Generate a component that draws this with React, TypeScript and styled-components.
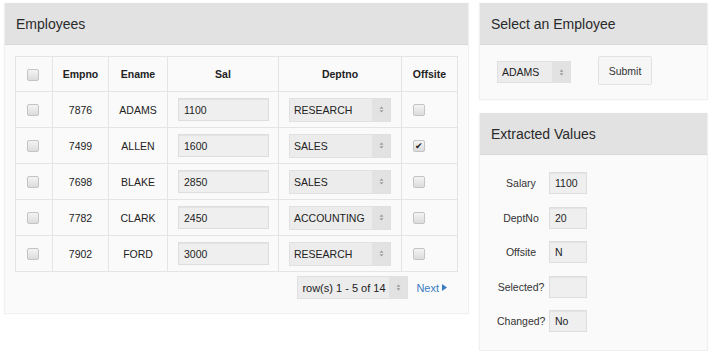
import * as React from 'react'
import styled, { createGlobalStyle } from 'styled-components'

const GlobalStyle = createGlobalStyle`
  html, body {
    margin: 0;
    padding: 0;
    background: #ffffff;
    font-family: 'Liberation Sans', Arial, Helvetica, sans-serif;
    color: #333333;
  }
`

const Page = styled.div`
  display: grid;
  grid-template-columns: 465px 229px;
  column-gap: 10px;
  padding: 3px 4px 0 4px;
  align-items: start;
`

const Column = styled.div`
  display: flex;
  flex-direction: column;
  gap: 13px;
`

const Panel = styled.div`
  background: #fafafa;
  border: 1px solid #f0f0f0;
  border-top: none;
  box-shadow: 0 0 2px rgba(0, 0, 0, 0.04);
`

const PanelHeader = styled.div`
  height: 42px;
  background: #e2e2e2;
  border-bottom: 1px solid #d8d8d8;
  box-sizing: border-box;
  display: flex;
  align-items: center;
  padding-left: 11px;
  font-size: 14px;
  color: #2a2a2a;
`

const TableBody = styled.div`
  padding: 11px 11px 14px 10px;
`

const Table = styled.table`
  border-collapse: collapse;
  width: 442px;
  table-layout: fixed;
  font-size: 10.5px;
  color: #222;
  background: #fafafa;

  th,
  td {
    border: 1px solid #e4e4e4;
    text-align: center;
    padding: 0;
  }
  th {
    height: 34px;
    font-weight: bold;
    font-size: 10.5px;
  }
  td {
    height: 35px;
  }
`

const CheckCell = styled.td<{ $pad: number }>`
  && {
    text-align: left;
    padding-left: ${p => p.$pad}px;
  }
`

const CheckHead = styled.th<{ $pad: number }>`
  && {
    text-align: left;
    padding-left: ${p => p.$pad}px;
  }
`

const Check = styled.span<{ $checked?: boolean }>`
  display: inline-flex;
  align-items: center;
  justify-content: center;
  width: 10px;
  height: 10px;
  border: 1px solid #c4c4c4;
  border-radius: 2px;
  background: linear-gradient(#f4f4f4, #dcdcdc);
  vertical-align: middle;
  font-size: 9px;
  line-height: 1;
  color: #222;
`

const TextInput = styled.div<{ $width: number; $height?: number }>`
  width: ${p => p.$width}px;
  height: ${p => p.$height || 23}px;
  box-sizing: border-box;
  background: #efefef;
  border: 1px solid #dedede;
  box-shadow: inset 0 1px 1px rgba(0, 0, 0, 0.05);
  display: flex;
  align-items: center;
  padding-left: 5px;
  font-size: 10.5px;
  color: #222;
  text-align: left;
`

const CellInner = styled.div<{ $pad: number }>`
  display: flex;
  padding-left: ${p => p.$pad}px;
`

const SelectBox = styled.div<{ $width: number; $height?: number; $size?: number }>`
  width: ${p => p.$width}px;
  height: ${p => p.$height || 24}px;
  box-sizing: border-box;
  background: #ececec;
  border: 1px solid #e0e0e0;
  display: flex;
  align-items: stretch;
  font-size: ${p => p.$size || 10.5}px;
  color: #222;
  text-align: left;
`

const SelectText = styled.span`
  flex: 1;
  display: flex;
  align-items: center;
  padding-left: 4px;
  white-space: nowrap;
  overflow: hidden;
`

const SelectArrow = styled.span`
  width: 18px;
  background: #e2e2e2;
  display: flex;
  align-items: center;
  justify-content: center;
`

const Pager = styled.div`
  display: flex;
  justify-content: flex-end;
  align-items: center;
  gap: 8px;
  padding: 4px 10px 0 0;
`

const NextLink = styled.a`
  color: #3b7cc0;
  font-size: 11px;
  text-decoration: none;
  display: flex;
  align-items: center;
  gap: 3px;
`

const SelectBody = styled.div`
  height: 54px;
  display: flex;
  align-items: center;
  padding-left: 17px;
  gap: 27px;
`

const Button = styled.button`
  height: 29px;
  width: 54px;
  margin-top: -3px;
  background: #f6f6f6;
  border: 1px solid #e2e2e2;
  border-radius: 2px;
  font-family: 'Liberation Sans', Arial, sans-serif;
  font-size: 10.5px;
  color: #333;
  padding: 0;
`

const FormGrid = styled.div`
  display: grid;
  grid-template-columns: 48px 38px;
  column-gap: 4px;
  row-gap: 12.5px;
  padding: 17px 0 18px 17px;
  align-items: center;
`

const FieldLabel = styled.span`
  text-align: center;
  font-size: 10.5px;
  color: #333;
  white-space: nowrap;
`

const Arrows = () => (
  <svg width="5" height="7" viewBox="0 0 5 7">
    <path d="M2.5 0.5 L4.5 2.8 H0.5 Z M2.5 6.5 L4.5 4.2 H0.5 Z" fill="#9a9a9a" />
  </svg>
)

const Select = ({ value, width, height, size }: { value: string; width: number; height?: number; size?: number }) => (
  <SelectBox $width={width} $height={height} $size={size}>
    <SelectText>{value}</SelectText>
    <SelectArrow>
      <Arrows />
    </SelectArrow>
  </SelectBox>
)

const employees = [
  { empno: '7876', ename: 'ADAMS', sal: '1100', dept: 'RESEARCH', offsite: false },
  { empno: '7499', ename: 'ALLEN', sal: '1600', dept: 'SALES', offsite: true },
  { empno: '7698', ename: 'BLAKE', sal: '2850', dept: 'SALES', offsite: false },
  { empno: '7782', ename: 'CLARK', sal: '2450', dept: 'ACCOUNTING', offsite: false },
  { empno: '7902', ename: 'FORD', sal: '3000', dept: 'RESEARCH', offsite: false },
]

const fields = [
  { label: 'Salary', value: '1100' },
  { label: 'DeptNo', value: '20' },
  { label: 'Offsite', value: 'N' },
  { label: 'Selected?', value: '' },
  { label: 'Changed?', value: 'No' },
]

export default function App() {
  return (
    <>
      <GlobalStyle />
      <Page>
        <Panel>
          <PanelHeader>Employees</PanelHeader>
          <TableBody>
            <Table>
              <colgroup>
                <col style={{ width: 37 }} />
                <col style={{ width: 56 }} />
                <col style={{ width: 59 }} />
                <col style={{ width: 111 }} />
                <col style={{ width: 123 }} />
                <col style={{ width: 56 }} />
              </colgroup>
              <thead>
                <tr>
                  <CheckHead $pad={11}>
                    <Check />
                  </CheckHead>
                  <th>Empno</th>
                  <th>Ename</th>
                  <th>Sal</th>
                  <th>Deptno</th>
                  <th>Offsite</th>
                </tr>
              </thead>
              <tbody>
                {employees.map(emp => (
                  <tr key={emp.empno}>
                    <CheckCell $pad={11}>
                      <Check />
                    </CheckCell>
                    <td>{emp.empno}</td>
                    <td>{emp.ename}</td>
                    <td>
                      <CellInner $pad={10}>
                        <TextInput $width={91}>{emp.sal}</TextInput>
                      </CellInner>
                    </td>
                    <td>
                      <CellInner $pad={10}>
                        <Select value={emp.dept} width={102} />
                      </CellInner>
                    </td>
                    <CheckCell $pad={11}>
                      <Check $checked={emp.offsite}>{emp.offsite ? '✔' : ''}</Check>
                    </CheckCell>
                  </tr>
                ))}
              </tbody>
            </Table>
            <Pager>
              <Select value="row(s) 1 - 5 of 14" width={111} height={23} size={11} />
              <NextLink href="#">
                Next
                <svg width="5" height="7" viewBox="0 0 5 7">
                  <path d="M0 0 L5 3.5 L0 7 Z" fill="#3b7cc0" />
                </svg>
              </NextLink>
            </Pager>
          </TableBody>
        </Panel>

        <Column>
          <Panel>
            <PanelHeader>Select an Employee</PanelHeader>
            <SelectBody>
              <Select value="ADAMS" width={74} height={22} />
              <Button>Submit</Button>
            </SelectBody>
          </Panel>
          <Panel>
            <PanelHeader>Extracted Values</PanelHeader>
            <FormGrid>
              {fields.map(f => (
                <React.Fragment key={f.label}>
                  <FieldLabel>{f.label}</FieldLabel>
                  <TextInput $width={38} $height={22}>
                    {f.value}
                  </TextInput>
                </React.Fragment>
              ))}
            </FormGrid>
          </Panel>
        </Column>
      </Page>
    </>
  )
}
